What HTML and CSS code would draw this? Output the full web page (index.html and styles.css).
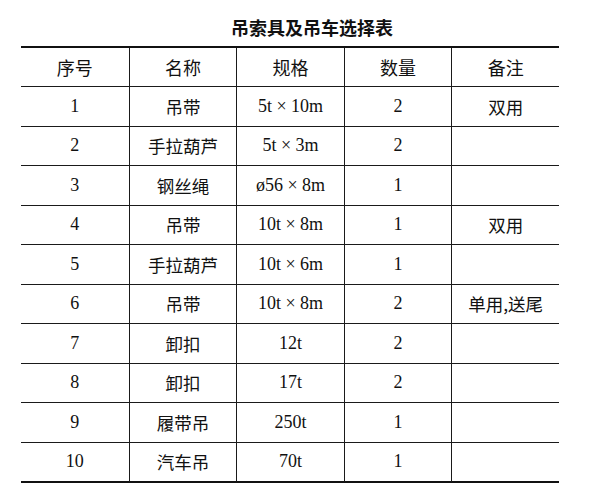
FILE: index.html
```html
<!DOCTYPE html>
<html lang="zh-CN">
<head>
<meta charset="utf-8">
<title>吊索具及吊车选择表</title>
<link rel="stylesheet" href="styles.css">
</head>
<body>
<div class="page">
  <h1 class="title">吊索具及吊车选择表</h1>
  <table class="sheet">
    <thead>
      <tr><th>序号</th><th>名称</th><th>规格</th><th>数量</th><th>备注</th></tr>
    </thead>
    <tbody>
      <tr><td class="num">1</td><td>吊带</td><td class="num">5t × 10m</td><td class="num">2</td><td>双用</td></tr>
      <tr><td class="num">2</td><td>手拉葫芦</td><td class="num">5t × 3m</td><td class="num">2</td><td></td></tr>
      <tr><td class="num">3</td><td>钢丝绳</td><td class="num">ø56 × 8m</td><td class="num">1</td><td></td></tr>
      <tr><td class="num">4</td><td>吊带</td><td class="num">10t × 8m</td><td class="num">1</td><td>双用</td></tr>
      <tr><td class="num">5</td><td>手拉葫芦</td><td class="num">10t × 6m</td><td class="num">1</td><td></td></tr>
      <tr><td class="num">6</td><td>吊带</td><td class="num">10t × 8m</td><td class="num">2</td><td>单用,送尾</td></tr>
      <tr><td class="num">7</td><td>卸扣</td><td class="num">12t</td><td class="num">2</td><td></td></tr>
      <tr><td class="num">8</td><td>卸扣</td><td class="num">17t</td><td class="num">2</td><td></td></tr>
      <tr><td class="num">9</td><td>履带吊</td><td class="num">250t</td><td class="num">1</td><td></td></tr>
      <tr><td class="num">10</td><td>汽车吊</td><td class="num">70t</td><td class="num">1</td><td></td></tr>
    </tbody>
  </table>
</div>
</body>
</html>
```

FILE: styles.css
```css
html, body {
  margin: 0;
  padding: 0;
  background: #ffffff;
}

.page {
  padding-top: 17px;
  padding-left: 21px;
  width: 538px;
}

.title {
  margin: 0;
  padding-left: 44px;
  height: 29px;
  font-family: "Noto Sans CJK SC", "Liberation Sans", sans-serif;
  font-size: 18px;
  font-weight: 700;
  line-height: 21px;
  text-align: center;
  color: #111111;
}

.sheet {
  width: 538px;
  border-collapse: separate;
  border-spacing: 0;
  table-layout: fixed;
  border-top: 2px solid #111111;
  color: #111111;
  font-family: "Noto Sans CJK SC", "Liberation Serif", serif;
}

.sheet th,
.sheet td {
  box-sizing: border-box;
  padding: 0;
  text-align: center;
  vertical-align: middle;
  border-bottom: 1px solid #1a1a1a;
  border-left: 1px solid #1a1a1a;
}

.sheet th:first-child,
.sheet td:first-child {
  border-left: none;
}

.sheet th {
  height: 39px;
  font-size: 18px;
  font-weight: 400;
}

.sheet td {
  height: 39.5px;
  font-size: 17.5px;
  font-weight: 400;
}

.sheet td.num {
  font-family: "Liberation Serif", "Noto Sans CJK SC", serif;
  font-size: 18px;
}

.sheet tbody tr:last-child td {
  border-bottom: 2px solid #111111;
  height: 40.5px;
}
```
